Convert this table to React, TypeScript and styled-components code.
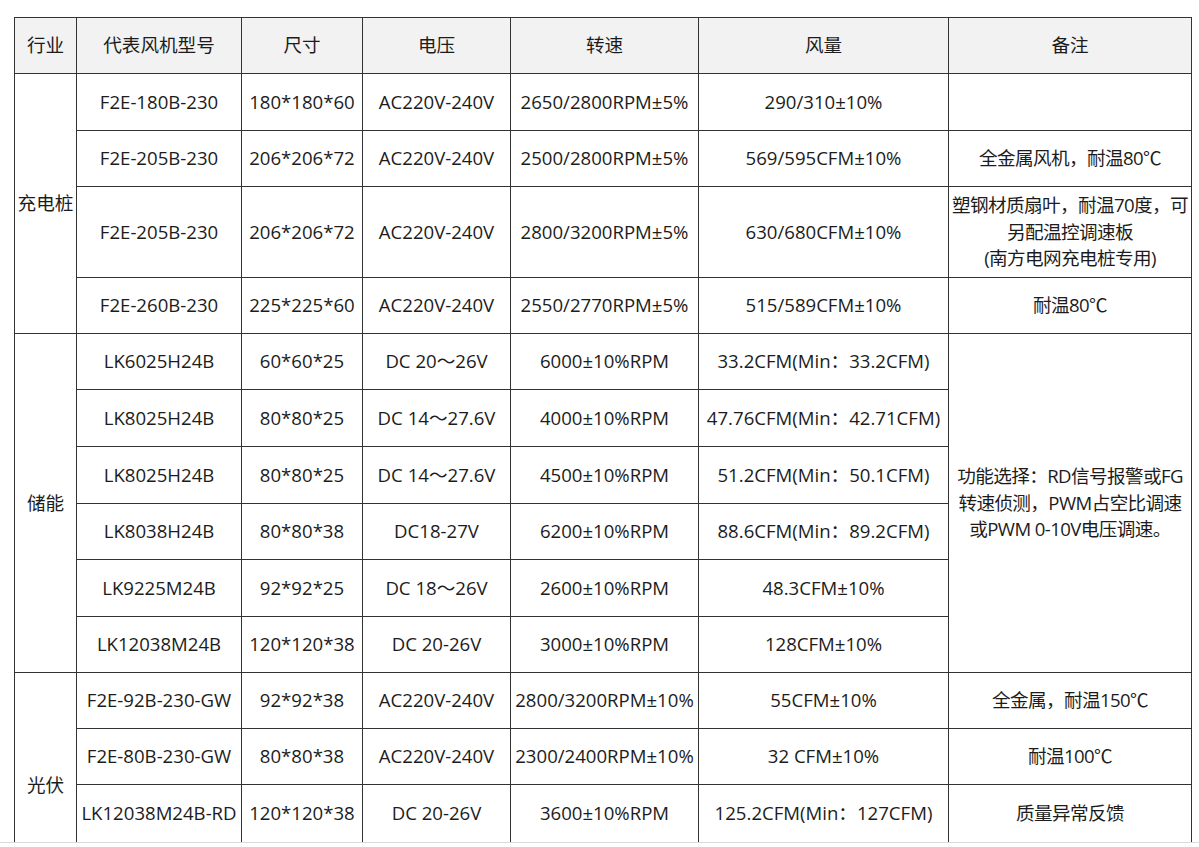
import React from "react";
import styled, { createGlobalStyle } from "styled-components";

const GlobalStyle = createGlobalStyle`
  html, body {
    margin: 0;
    padding: 0;
    background: #ffffff;
  }
  body {
    font-family: "Open Sans", "Noto Sans CJK SC", sans-serif;
    color: #1c1c1c;
  }
`;

const Page = styled.div`
  padding: 17px 0 0 14px;
`;

const Table = styled.table`
  border-collapse: collapse;
  table-layout: fixed;
  width: 1177px;
  font-size: 18.6px;
  line-height: 26.5px;
`;

const Col = styled.col<{ $w: number }>`
  width: ${(p) => p.$w}px;
`;

const HeadRow = styled.tr`
  height: 56px;
  background: #f2f2f2;
`;

const Row = styled.tr<{ $h: number }>`
  height: ${(p) => p.$h}px;
`;

const HeadCell = styled.th`
  border: 1px solid #333333;
  font-weight: 400;
  text-align: center;
  vertical-align: middle;
  padding: 0 4px;
  white-space: nowrap;
`;

const Cell = styled.td`
  border: 1px solid #333333;
  text-align: center;
  vertical-align: middle;
  padding: 0 2px;
  white-space: nowrap;
  overflow: hidden;
`;

const NoteCell = styled(Cell)`
  letter-spacing: -0.6px;
`;

const BottomEdge = styled.div`
  position: fixed;
  left: 0;
  right: 0;
  bottom: 0;
  height: 4px;
  background: #ffffff;
  border-top: 1px solid #dcdcdc;
`;

type Item = {
  model: string;
  size: string;
  volt: string;
  speed: string;
  flow: string;
  h: number;
};

type Group = {
  name: string;
  items: Item[];
  notes: { span: number; content: React.ReactNode }[];
};

const groups: Group[] = [
  {
    name: "充电桩",
    items: [
      { model: "F2E-180B-230", size: "180*180*60", volt: "AC220V-240V", speed: "2650/2800RPM±5%", flow: "290/310±10%", h: 57 },
      { model: "F2E-205B-230", size: "206*206*72", volt: "AC220V-240V", speed: "2500/2800RPM±5%", flow: "569/595CFM±10%", h: 56 },
      { model: "F2E-205B-230", size: "206*206*72", volt: "AC220V-240V", speed: "2800/3200RPM±5%", flow: "630/680CFM±10%", h: 91 },
      { model: "F2E-260B-230", size: "225*225*60", volt: "AC220V-240V", speed: "2550/2770RPM±5%", flow: "515/589CFM±10%", h: 56 },
    ],
    notes: [
      { span: 1, content: "" },
      { span: 1, content: "全金属风机，耐温80℃" },
      {
        span: 1,
        content: (
          <>
            塑钢材质扇叶，耐温70度，可
            <br />
            另配温控调速板
            <br />
            (南方电网充电桩专用)
          </>
        ),
      },
      { span: 1, content: "耐温80℃" },
    ],
  },
  {
    name: "储能",
    items: [
      { model: "LK6025H24B", size: "60*60*25", volt: "DC 20～26V", speed: "6000±10%RPM", flow: "33.2CFM(Min：33.2CFM)", h: 56 },
      { model: "LK8025H24B", size: "80*80*25", volt: "DC 14～27.6V", speed: "4000±10%RPM", flow: "47.76CFM(Min：42.71CFM)", h: 57 },
      { model: "LK8025H24B", size: "80*80*25", volt: "DC 14～27.6V", speed: "4500±10%RPM", flow: "51.2CFM(Min：50.1CFM)", h: 57 },
      { model: "LK8038H24B", size: "80*80*38", volt: "DC18-27V", speed: "6200±10%RPM", flow: "88.6CFM(Min：89.2CFM)", h: 56 },
      { model: "LK9225M24B", size: "92*92*25", volt: "DC 18～26V", speed: "2600±10%RPM", flow: "48.3CFM±10%", h: 57 },
      { model: "LK12038M24B", size: "120*120*38", volt: "DC 20-26V", speed: "3000±10%RPM", flow: "128CFM±10%", h: 56 },
    ],
    notes: [
      {
        span: 6,
        content: (
          <>
            功能选择：RD信号报警或FG
            <br />
            转速侦测，PWM占空比调速
            <br />
            或PWM 0-10V电压调速。
          </>
        ),
      },
    ],
  },
  {
    name: "光伏",
    items: [
      { model: "F2E-92B-230-GW", size: "92*92*38", volt: "AC220V-240V", speed: "2800/3200RPM±10%", flow: "55CFM±10%", h: 56 },
      { model: "F2E-80B-230-GW", size: "80*80*38", volt: "AC220V-240V", speed: "2300/2400RPM±10%", flow: "32 CFM±10%", h: 56 },
      { model: "LK12038M24B-RD", size: "120*120*38", volt: "DC 20-26V", speed: "3600±10%RPM", flow: "125.2CFM(Min：127CFM)", h: 58 },
      { model: "", size: "", volt: "", speed: "", flow: "", h: 56 },
    ],
    notes: [
      { span: 1, content: "全金属，耐温150℃" },
      { span: 1, content: "耐温100℃" },
      { span: 1, content: "质量异常反馈" },
      { span: 1, content: "" },
    ],
  },
];

const headers = ["行业", "代表风机型号", "尺寸", "电压", "转速", "风量", "备注"];
const widths = [62, 165, 121, 148, 188, 250, 243];

function noteAt(group: Group, index: number) {
  let pos = 0;
  for (const n of group.notes) {
    if (pos === index) return n;
    pos += n.span;
  }
  return null;
}

export default function App() {
  return (
    <>
      <GlobalStyle />
      <Page>
        <Table>
          <colgroup>
            {widths.map((w, i) => (
              <Col key={i} $w={w} />
            ))}
          </colgroup>
          <thead>
            <HeadRow>
              {headers.map((h) => (
                <HeadCell key={h}>{h}</HeadCell>
              ))}
            </HeadRow>
          </thead>
          <tbody>
            {groups.map((g) =>
              g.items.map((it, i) => {
                const note = noteAt(g, i);
                return (
                  <Row key={g.name + i} $h={it.h}>
                    {i === 0 && <Cell rowSpan={g.items.length}>{g.name}</Cell>}
                    <Cell>{it.model}</Cell>
                    <Cell>{it.size}</Cell>
                    <Cell>{it.volt}</Cell>
                    <Cell>{it.speed}</Cell>
                    <Cell>{it.flow}</Cell>
                    {note && <NoteCell rowSpan={note.span}>{note.content}</NoteCell>}
                  </Row>
                );
              })
            )}
          </tbody>
        </Table>
      </Page>
      <BottomEdge />
    </>
  );
}
